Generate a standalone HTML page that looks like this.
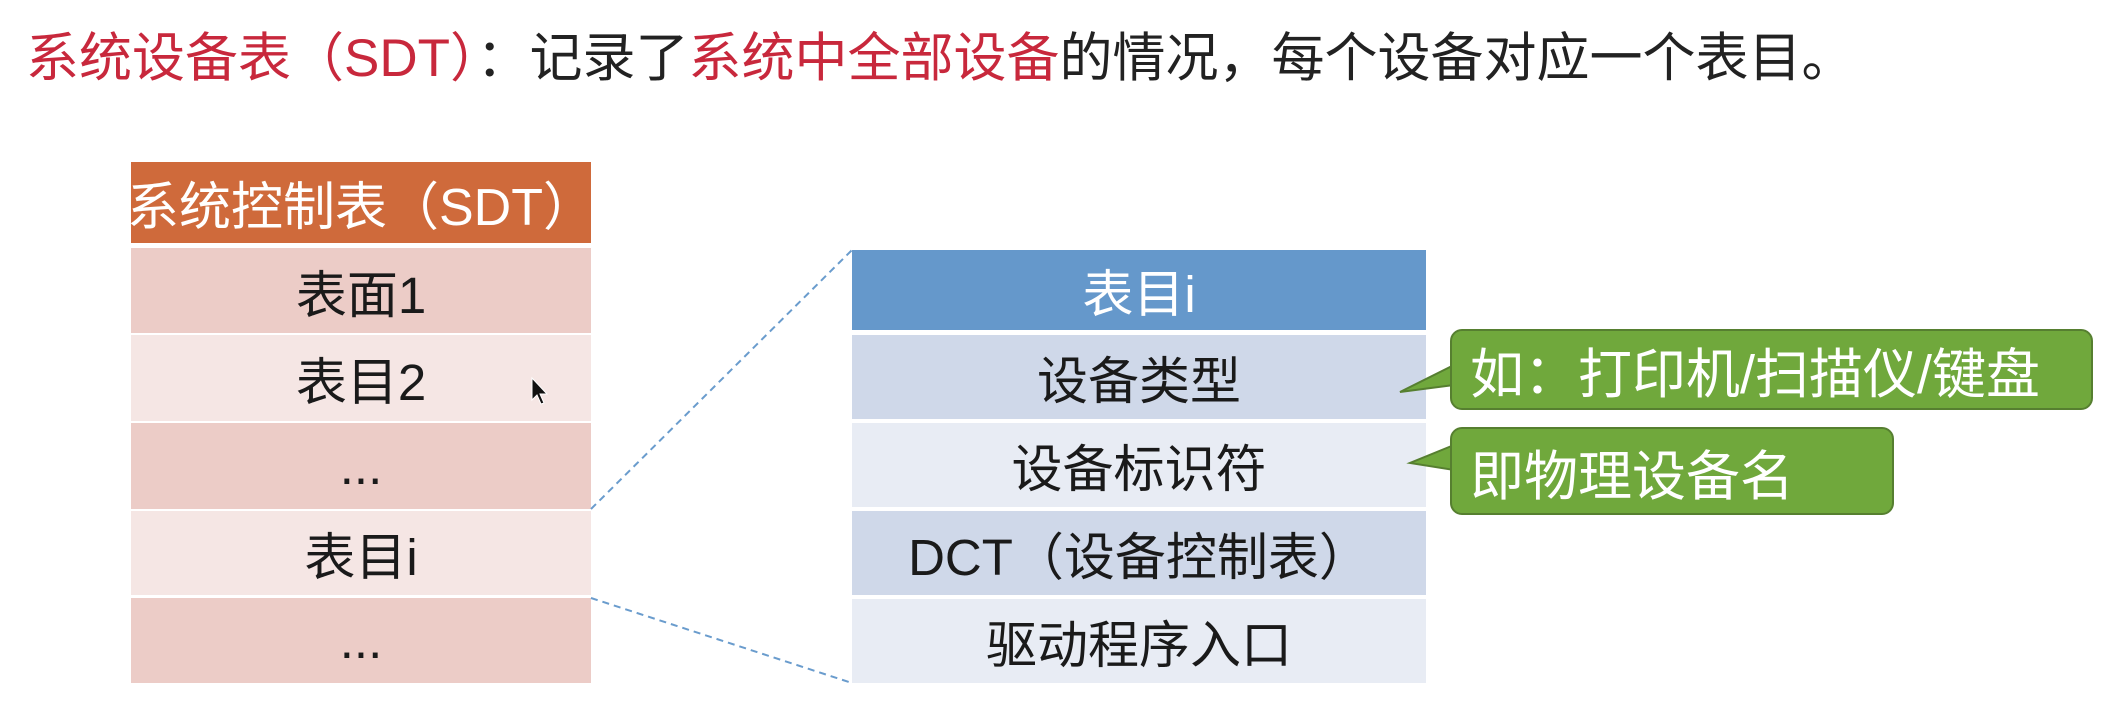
<!DOCTYPE html>
<html><head><meta charset="utf-8"><style>
body{margin:0;width:2121px;height:707px;background:#fff;position:relative;overflow:hidden;font-family:"Liberation Sans","Noto Sans CJK SC",sans-serif;}
.t{position:absolute;left:26px;top:24px;font-size:53px;line-height:70px;color:#222;white-space:nowrap;}
.r{color:#c8283c}
.c{position:absolute;display:flex;align-items:center;justify-content:center;font-size:51px;color:#1a1a1a;white-space:nowrap;}
.bub{position:absolute;background:#70a83c;border:2px solid #567f30;border-radius:12px;color:#fff;font-size:54px;box-sizing:border-box;padding-left:18px;display:flex;align-items:center;white-space:nowrap;}
</style></head><body>
<div class="t"><span class="r">系统设备表（SDT）</span>：记录了<span class="r">系统中全部设备</span>的情况，每个设备对应一个表目。</div>

<div class="c" style="left:131px;top:162px;width:460px;height:81px;background:#cf6a3b;color:#fff;font-size:52px;">系统控制表（SDT）</div>
<div class="c" style="left:131px;top:248px;width:460px;height:85px;background:#ecccc7">表面1</div>
<div class="c" style="left:131px;top:335px;width:460px;height:86px;background:#f5e6e4">表目2</div>
<div class="c" style="left:131px;top:423px;width:460px;height:86px;background:#ecccc7">...</div>
<div class="c" style="left:131px;top:511px;width:460px;height:84px;background:#f5e6e4">表目i</div>
<div class="c" style="left:131px;top:598px;width:460px;height:85px;background:#ecccc7">...</div>

<div class="c" style="left:852px;top:250px;width:574px;height:80px;background:#6598cb;color:#fff">表目i</div>
<div class="c" style="left:852px;top:335px;width:574px;height:84px;background:#cfd8e9">设备类型</div>
<div class="c" style="left:852px;top:423px;width:574px;height:84px;background:#e8ecf4">设备标识符</div>
<div class="c" style="left:852px;top:511px;width:574px;height:84px;background:#cfd8e9">DCT（设备控制表）</div>
<div class="c" style="left:852px;top:599px;width:574px;height:84px;background:#e8ecf4">驱动程序入口</div>

<svg style="position:absolute;left:0;top:0" width="2121" height="707">
<line x1="591" y1="509" x2="852" y2="250" stroke="#6a9ccd" stroke-width="2" stroke-dasharray="7,5"/>
<line x1="591" y1="598" x2="852" y2="683" stroke="#6a9ccd" stroke-width="2" stroke-dasharray="7,5"/>
<polygon points="1454,365 1400,392 1454,385" fill="#70a83c" stroke="#567f30" stroke-width="2"/>
<polygon points="1454,445 1410,463 1454,470" fill="#70a83c" stroke="#567f30" stroke-width="2"/>
<path d="M532,378 l0,22 l5,-5 l4,9 l3,-1 l-4,-9 l7,0 z" fill="#111" stroke="#fff" stroke-width="1"/>
</svg>
<div class="bub" style="left:1450px;top:329px;width:643px;height:81px;">如：打印机/扫描仪/键盘</div>
<div class="bub" style="left:1450px;top:427px;width:444px;height:88px;">即物理设备名</div>
</body></html>
